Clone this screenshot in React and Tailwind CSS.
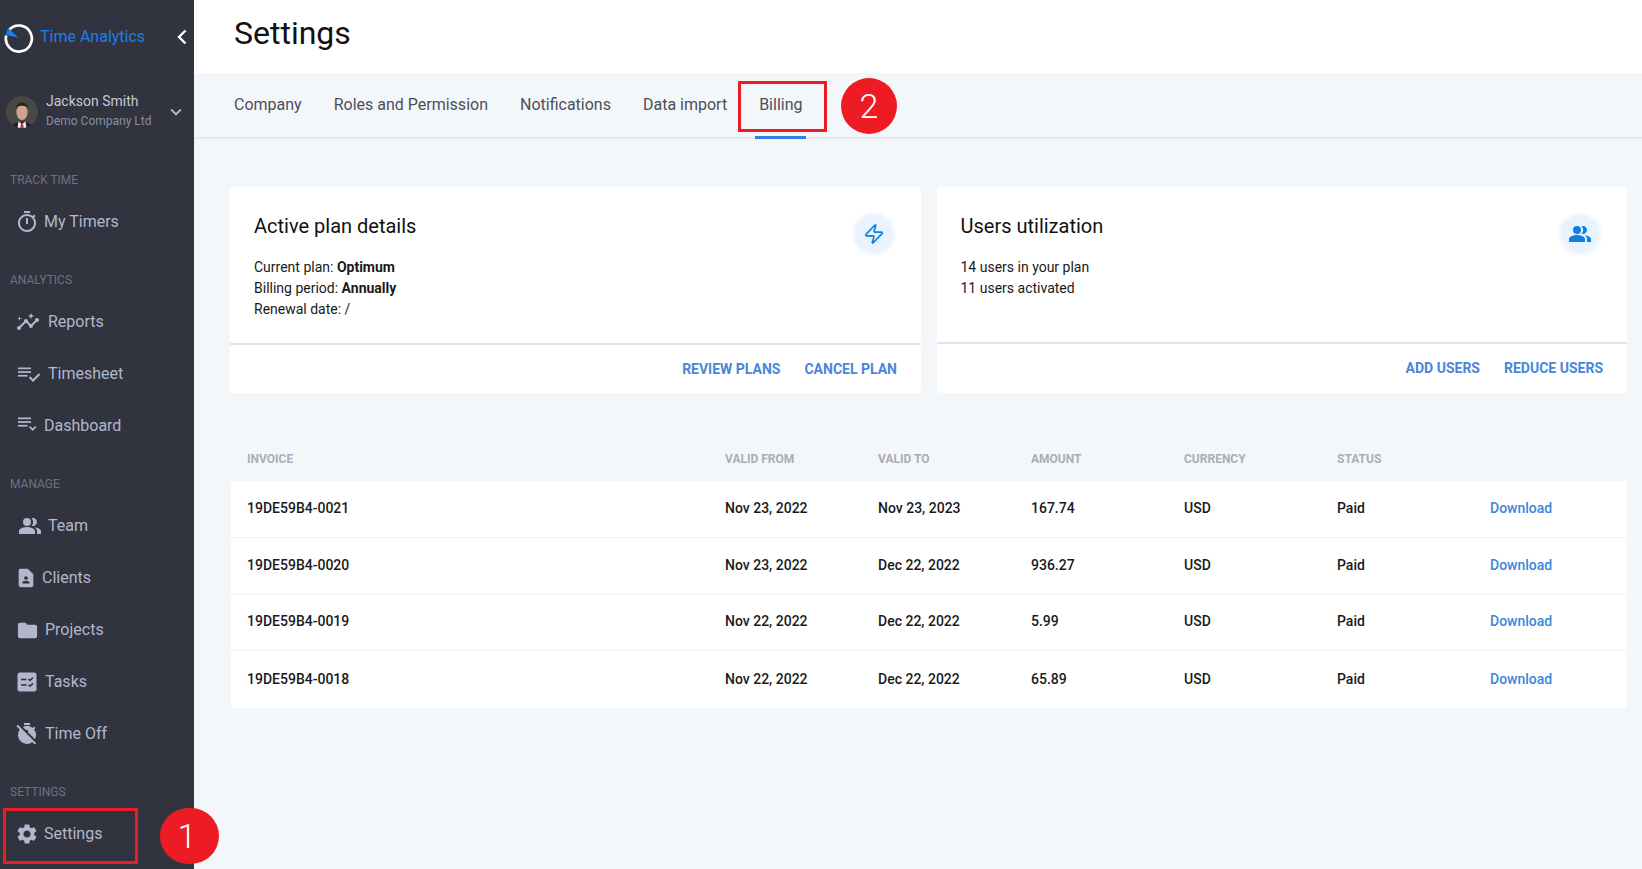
import React from "react";
import { MdOutlineTimer, MdInsights, MdPeopleAlt, MdContactPage, MdFolder, MdTimerOff, MdSettings, MdExpandMore } from "react-icons/md";
import { Zap } from "lucide-react";

const SheetIcon = ({ size = 24 }) => (
  <svg width={size} height={size} viewBox="0 0 24 24" fill="currentColor">
    <rect x="2" y="5.500" width="13" height="1.700" />
    <rect x="2" y="9.200" width="13" height="1.700" />
    <rect x="2" y="12.900" width="9.500" height="1.700" />
    <path d="M13.500 15l3.500 3.500L23.500 12" fill="none" stroke="currentColor" strokeWidth="2" />
  </svg>
);

const DashIcon = ({ size = 24 }) => (
  <svg width={size} height={size} viewBox="0 0 24 24" fill="currentColor">
    <rect x="2" y="3.500" width="13" height="1.700" />
    <rect x="2" y="7.200" width="13" height="1.700" />
    <rect x="2" y="10.900" width="9.500" height="1.700" />
    <path d="M13.500 12.500l3.200 3.200 3.200-3.200" fill="none" stroke="currentColor" strokeWidth="1.700" />
  </svg>
);

const TaskIcon = ({ size = 24 }) => (
  <svg width={size} height={size} viewBox="0 0 24 24">
    <rect x="2.500" y="2.500" width="19" height="19" rx="2.500" fill="currentColor" />
    <path d="M6 9.500h5.500M6 15h5.500" stroke="#31333f" strokeWidth="1.700" />
    <path d="M13.500 9l1.500 1.500 3-3M13.500 14.800l1.500 1.500 3-3" fill="none" stroke="#31333f" strokeWidth="1.500" />
  </svg>
);

const Logo = () => (
  <svg width="30" height="30" viewBox="0 0 30 30" className="mt-[3px]">
    <path d="M5.500 6.500 A13 13 0 1 1 2.200 12.500" fill="none" stroke="#fff" strokeWidth="2.700" />
    <path d="M1.700 11.700 L4.300 4.700 L14.300 14.700 Z" fill="#1a7fe8" />
  </svg>
);

const Avatar = () => (
  <svg width="32" height="32" viewBox="0 0 32 32" className="rounded-full">
    <rect width="32" height="32" fill="#4a4845" />
    <path d="M5 32c1-4 4-5 8-6h6c4 1 7 2 8 6z" fill="#1c1f2b" />
    <path d="M12.500 25.500l3.500 2.500 3.500-2.500 1 6.500h-9z" fill="#f1efee" />
    <path d="M15 28h2l.8 4h-3.600z" fill="#d22630" />
    <ellipse cx="16" cy="16" rx="5.600" ry="8" fill="#cfa48c" />
    <path d="M10 13c0-4.500 2.500-6.500 6-6.500s6 2 6 6.500c-1-2.500-3-3.300-6-3.300s-5 .8-6 3.300z" fill="#2c2522" />
  </svg>
);

const sections = [
  { title: "TRACK TIME", items: [
    { label: "My Timers", Icon: MdOutlineTimer, size: 24, pad: "pl-[15px]", box: "w-[29px]" },
  ]},
  { title: "ANALYTICS", items: [
    { label: "Reports", Icon: MdInsights, size: 24, pad: "pl-[16px]", box: "w-[32px]" },
    { label: "Timesheet", Icon: SheetIcon, size: 24, pad: "pl-[16px]", box: "w-[32px]" },
    { label: "Dashboard", Icon: DashIcon, size: 24, pad: "pl-[16px]", box: "w-[28px]" },
  ]},
  { title: "MANAGE", items: [
    { label: "Team", Icon: MdPeopleAlt, size: 24, pad: "pl-[18px]", box: "w-[30px]" },
    { label: "Clients", Icon: MdContactPage, size: 22, pad: "pl-[15px]", box: "w-[27px]" },
    { label: "Projects", Icon: MdFolder, size: 23, pad: "pl-[16px]", box: "w-[29px]" },
    { label: "Tasks", Icon: TaskIcon, size: 24, pad: "pl-[15px]", box: "w-[30px]" },
    { label: "Time Off", Icon: MdTimerOff, size: 24, pad: "pl-[15px]", box: "w-[30px]" },
  ]},
  { title: "SETTINGS", items: [
    { label: "Settings", Icon: MdSettings, size: 24, pad: "pl-[15px]", box: "w-[29px]" },
  ]},
];

const invoices = [
  ["19DE59B4-0021", "Nov 23, 2022", "Nov 23, 2023", "167.74"],
  ["19DE59B4-0020", "Nov 23, 2022", "Dec 22, 2022", "936.27"],
  ["19DE59B4-0019", "Nov 22, 2022", "Dec 22, 2022", "5.99"],
  ["19DE59B4-0018", "Nov 22, 2022", "Dec 22, 2022", "65.89"],
];

const cols = "grid grid-cols-[478px_153px_153px_153px_153px_153px_1fr] pl-4";

const IconCircle = ({ children }) => (
  <div className="mt-[3px] flex h-[38px] w-[38px] shrink-0 items-center justify-center rounded-full bg-[#e9f3fd] text-[#0f7fe0] ring-[3px] ring-[#f4f9fe]">
    {children}
  </div>
);

const CardAction = ({ children }) => (
  <button className="text-[14px] font-bold text-[#4a86d8]">{children}</button>
);

const Card = ({ title, icon, lines, actions, bodyH, width, padL }) => (
  <div className={`${width} overflow-hidden rounded bg-white`}>
    <div className={`flex justify-between border-b-2 border-[#e2e4e8] pr-[28px] pt-[25px] ${padL} ${bodyH}`}>
      <div>
        <h2 className="text-[20px] leading-[28px] text-[#111]">{title}</h2>
        <div className="mt-[17px] text-[14px] leading-[21px] text-[#1a1a1a]">{lines}</div>
      </div>
      <IconCircle>{icon}</IconCircle>
    </div>
    <div className="flex h-[48px] items-center justify-end gap-6 pr-6">{actions}</div>
  </div>
);

export default function App() {
  return (
    <div className="relative flex h-[869px] w-[1642px] overflow-hidden bg-[#f4f7fa] font-['Roboto',sans-serif]">
      <aside className="flex w-[194px] shrink-0 flex-col bg-[#31333f]">
        <div className="flex h-[72px] items-center pl-1 pr-[7px]">
          <Logo />
          <span className="ml-[6px] mt-[2px] flex-1 text-[16px] text-[#1a7fe8]">Time Analytics</span>
          <svg width="10" height="16" viewBox="0 0 10 16" className="mt-[2px] text-white">
            <path d="M8.500 1.500L2 8l6.500 6.500" fill="none" stroke="currentColor" strokeWidth="2.400" />
          </svg>
        </div>
        <div className="mt-6 flex h-8 items-center pl-[6px] pr-[7px]">
          <Avatar />
          <div className="ml-2 -mt-[3px] flex-1">
            <div className="text-[14px] leading-[18px] text-[#c5c8d6]">Jackson Smith</div>
            <div className="mt-[2px] text-[12px] leading-[18px] text-[#8a8da2]">Demo Company Ltd</div>
          </div>
          <MdExpandMore size={22} className="text-[#b3b7cc]" />
        </div>
        <div className="mt-[44px] flex flex-col gap-6">
          {sections.map((s) => (
            <div key={s.title}>
              <div className="pl-[10px] text-[12px] leading-4 text-[#6e7183]">{s.title}</div>
              <div className="mt-2">
                {s.items.map(({ label, Icon, size, pad, box }) => (
                  <div key={label} className={`flex h-[52px] items-center text-[16px] text-[#b3b7cc] ${pad}`}>
                    <span className={`flex shrink-0 items-center ${box}`}><Icon size={size} /></span>
                    <span>{label}</span>
                  </div>
                ))}
              </div>
            </div>
          ))}
        </div>
      </aside>

      <main className="flex min-w-0 flex-1 flex-col">
        <header className="flex h-[73px] items-center bg-white pb-[8px] pl-10">
          <h1 className="text-[32px] text-[#111]">Settings</h1>
        </header>
        <nav className="flex h-[66px] border-b-2 border-[#e6e9ed] pl-10 text-[16px] text-[#4b4f5a]">
          {["Company", "Roles and Permission", "Notifications", "Data import", "Billing"].map((t) => (
            <div key={t} className="relative mr-8 flex h-[65px] items-center pb-[1px]">
              {t}
              {t === "Billing" && <span className="absolute -bottom-[1px] -left-1 -right-1 h-[3px] bg-[#2f80e8]" />}
            </div>
          ))}
        </nav>

        <div className="pl-9 pr-[15px] pt-12">
          <div className="flex gap-4">
            <Card
              width="w-[691px]"
              bodyH="h-[158px]"
              padL="pl-6"
              title="Active plan details"
              icon={<Zap size={22} strokeWidth={1.8} />}
              lines={<>
                <div>Current plan: <b className="font-bold">Optimum</b></div>
                <div>Billing period: <b className="font-bold">Annually</b></div>
                <div>Renewal date: /</div>
              </>}
              actions={<><CardAction>REVIEW PLANS</CardAction><CardAction>CANCEL PLAN</CardAction></>}
            />
            <Card
              width="w-[690px]"
              bodyH="h-[157px]"
              padL="pl-[23.500px]"
              title="Users utilization"
              icon={<MdPeopleAlt size={24} />}
              lines={<>
                <div>14 users in your plan</div>
                <div>11 users activated</div>
              </>}
              actions={<><CardAction>ADD USERS</CardAction><CardAction>REDUCE USERS</CardAction></>}
            />
          </div>

          <div className="ml-px mr-px mt-[44px]">
            <div className={`${cols} h-[44px] items-center text-[12px] font-bold text-[#a9adb9]`}>
              {["INVOICE", "VALID FROM", "VALID TO", "AMOUNT", "CURRENCY", "STATUS"].map((h) => <div key={h}>{h}</div>)}
            </div>
            <div className="bg-white">
              {invoices.map((r, i) => (
                <div key={r[0]} className={`${cols} h-[56.750px] items-center pb-[1px] text-[14px] font-medium text-[#1a1a1a] ${i < 3 ? "border-b border-[#f1f3f6]" : ""}`}>
                  <div>{r[0]}</div>
                  <div>{r[1]}</div>
                  <div>{r[2]}</div>
                  <div>{r[3]}</div>
                  <div>USD</div>
                  <div>Paid</div>
                  <div className="text-[#3d86d8]">Download</div>
                </div>
              ))}
            </div>
          </div>
        </div>
      </main>

      {/* Annotation overlays */}
      <div className="absolute left-[3px] top-[808px] h-[56px] w-[135px] border-[3px] border-[#ed1c24]" />
      <div className="absolute left-[160px] top-[808px] flex h-[56px] w-[59px] items-center justify-center rounded-full bg-[#ed1c24] pr-[5px] text-[34px] font-light text-white">1</div>
      <div className="absolute left-[738px] top-[81px] h-[51px] w-[89px] border-[3px] border-[#ed1c24]" />
      <div className="absolute left-[841px] top-[78px] flex h-[56px] w-[56px] items-center justify-center rounded-full bg-[#ed1c24] text-[34px] font-light text-white">2</div>
    </div>
  );
}
